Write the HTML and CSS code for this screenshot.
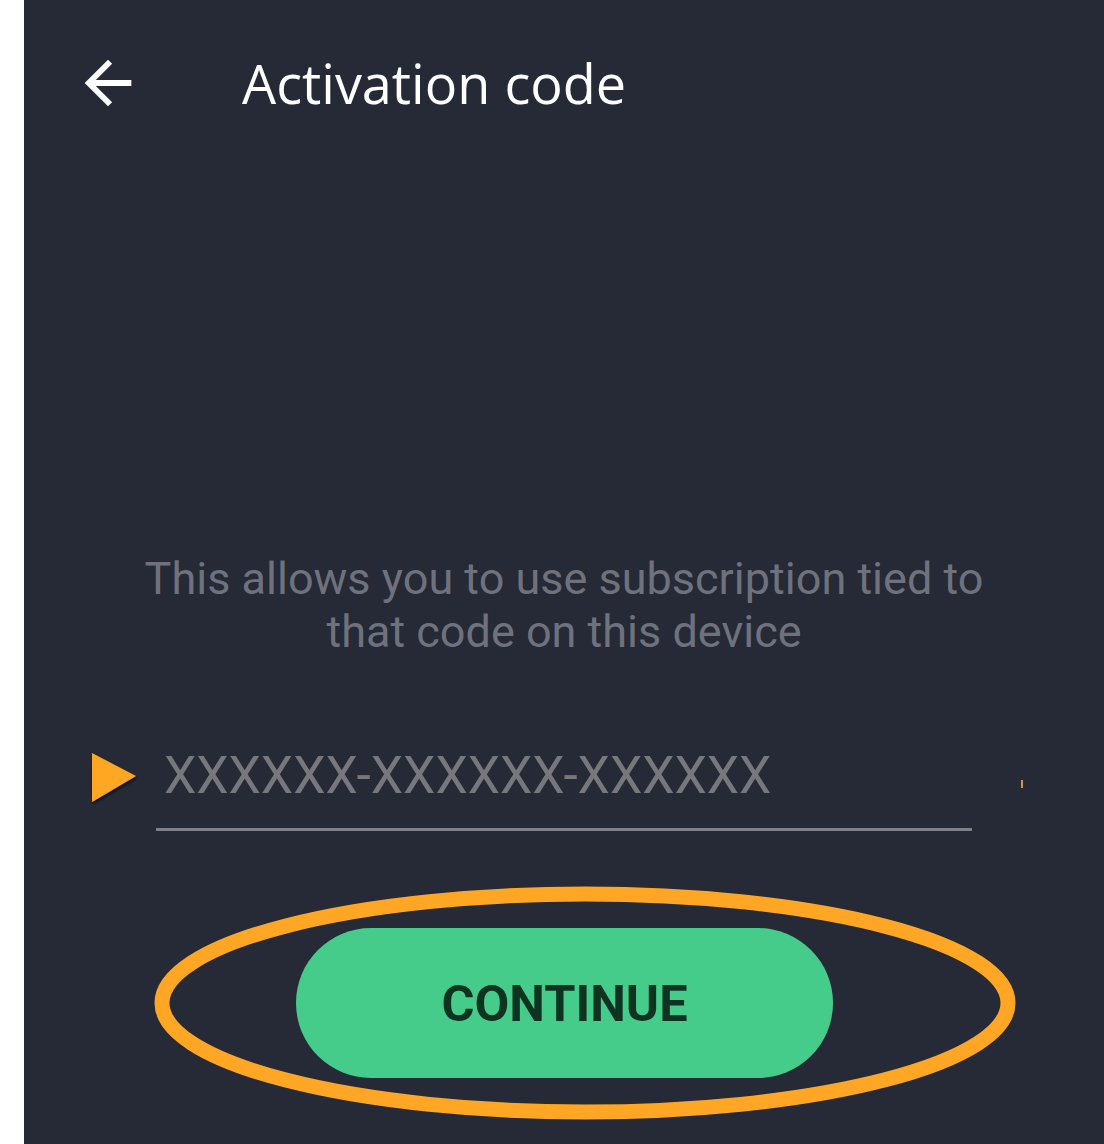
FILE: index.html
```html
<!DOCTYPE html>
<html>
<head>
<meta charset="utf-8">
<link rel="stylesheet" href="styles.css">
</head>
<body>
<div class="screen">
  <header class="topbar">
    <svg class="back" viewBox="0 0 24 24" width="70" height="70"><path d="M20 11H7.83l5.59-5.59L12 4l-8 8 8 8 1.41-1.41L7.83 13H20v-2z" fill="#fff"/></svg>
    <h1 class="title">Activation code</h1>
  </header>
  <p class="info">This allows you to use subscription tied to<br>that code on this device</p>
  <div class="field-row">
    <svg class="pointer" viewBox="0 0 50 56" width="50" height="56"><defs><filter id="sh" x="-30%" y="-30%" width="160%" height="160%"><feDropShadow dx="1" dy="2" stdDeviation="1.5" flood-color="#000" flood-opacity="0.7"/></filter></defs><polygon points="2,1 46,24 2,50" fill="#ffa724" filter="url(#sh)"/></svg>
    <div class="field">
      <span class="placeholder">XXXXXX-XXXXXX-XXXXXX</span>
    </div>
    <span class="caret"></span>
  </div>
  <div class="btn-wrap">
    <button class="continue">CONTINUE</button>
    <svg class="ring" viewBox="0 0 870 242" width="870" height="242"><ellipse cx="435" cy="121" rx="423" ry="109" fill="none" stroke="#ffa724" stroke-width="15"/></svg>
  </div>
</div>
</body>
</html>
```
FILE: styles.css
```css
html, body { margin: 0; padding: 0; background: #fff; }
.screen {
  margin-left: 24px;
  width: 1080px;
  height: 1144px;
  background: #252a36;
  position: relative;
  overflow: hidden;
}
.topbar {
  display: flex;
  align-items: center;
  height: 166px;
  padding-left: 49px;
  box-sizing: border-box;
}
.back { display: block; margin-top: -1px; }
.title {
  margin: 0 0 0 99px;
  font-family: "Open Sans", "Noto Sans", sans-serif;
  font-weight: 400;
  font-size: 54px;
  color: #fff;
  line-height: 1;
  align-self: flex-start;
  padding-top: 56px;
}
.info {
  margin: 386px 0 0;
  text-align: center;
  font-family: Roboto, sans-serif;
  font-size: 45px;
  line-height: 53px;
  color: #6f727d;
}
.field-row {
  display: flex;
  align-items: flex-start;
  margin-top: 77px;
  padding-left: 66px;
  position: relative;
}
.pointer { display: block; margin-top: 17px; }
.field {
  margin-left: 16px;
  width: 816px;
  height: 96px;
  border-bottom: 3px solid #7e7f89;
  box-sizing: border-box;
  padding-left: 8px;
}
.placeholder {
  display: block;
  font-family: Roboto, sans-serif;
  font-size: 51.5px;
  line-height: 96px;
  color: #78787c;
  margin-top: -7px;
}
.caret {
  position: absolute;
  left: 997px;
  top: 45px;
  width: 2px;
  height: 8px;
  background: #d49a2a;
}
.btn-wrap {
  position: relative;
  margin-top: 97px;
  display: flex;
  justify-content: center;
}
.continue {
  width: 537px;
  height: 150px;
  margin-left: 1px;
  border: 0;
  border-radius: 75px;
  background: #45cc8a;
  color: #0f3321;
  font-family: Roboto, sans-serif;
  font-weight: 700;
  font-size: 50.5px;
  padding: 0;
}
.ring {
  position: absolute;
  left: 126px;
  top: -46px;
}
```
